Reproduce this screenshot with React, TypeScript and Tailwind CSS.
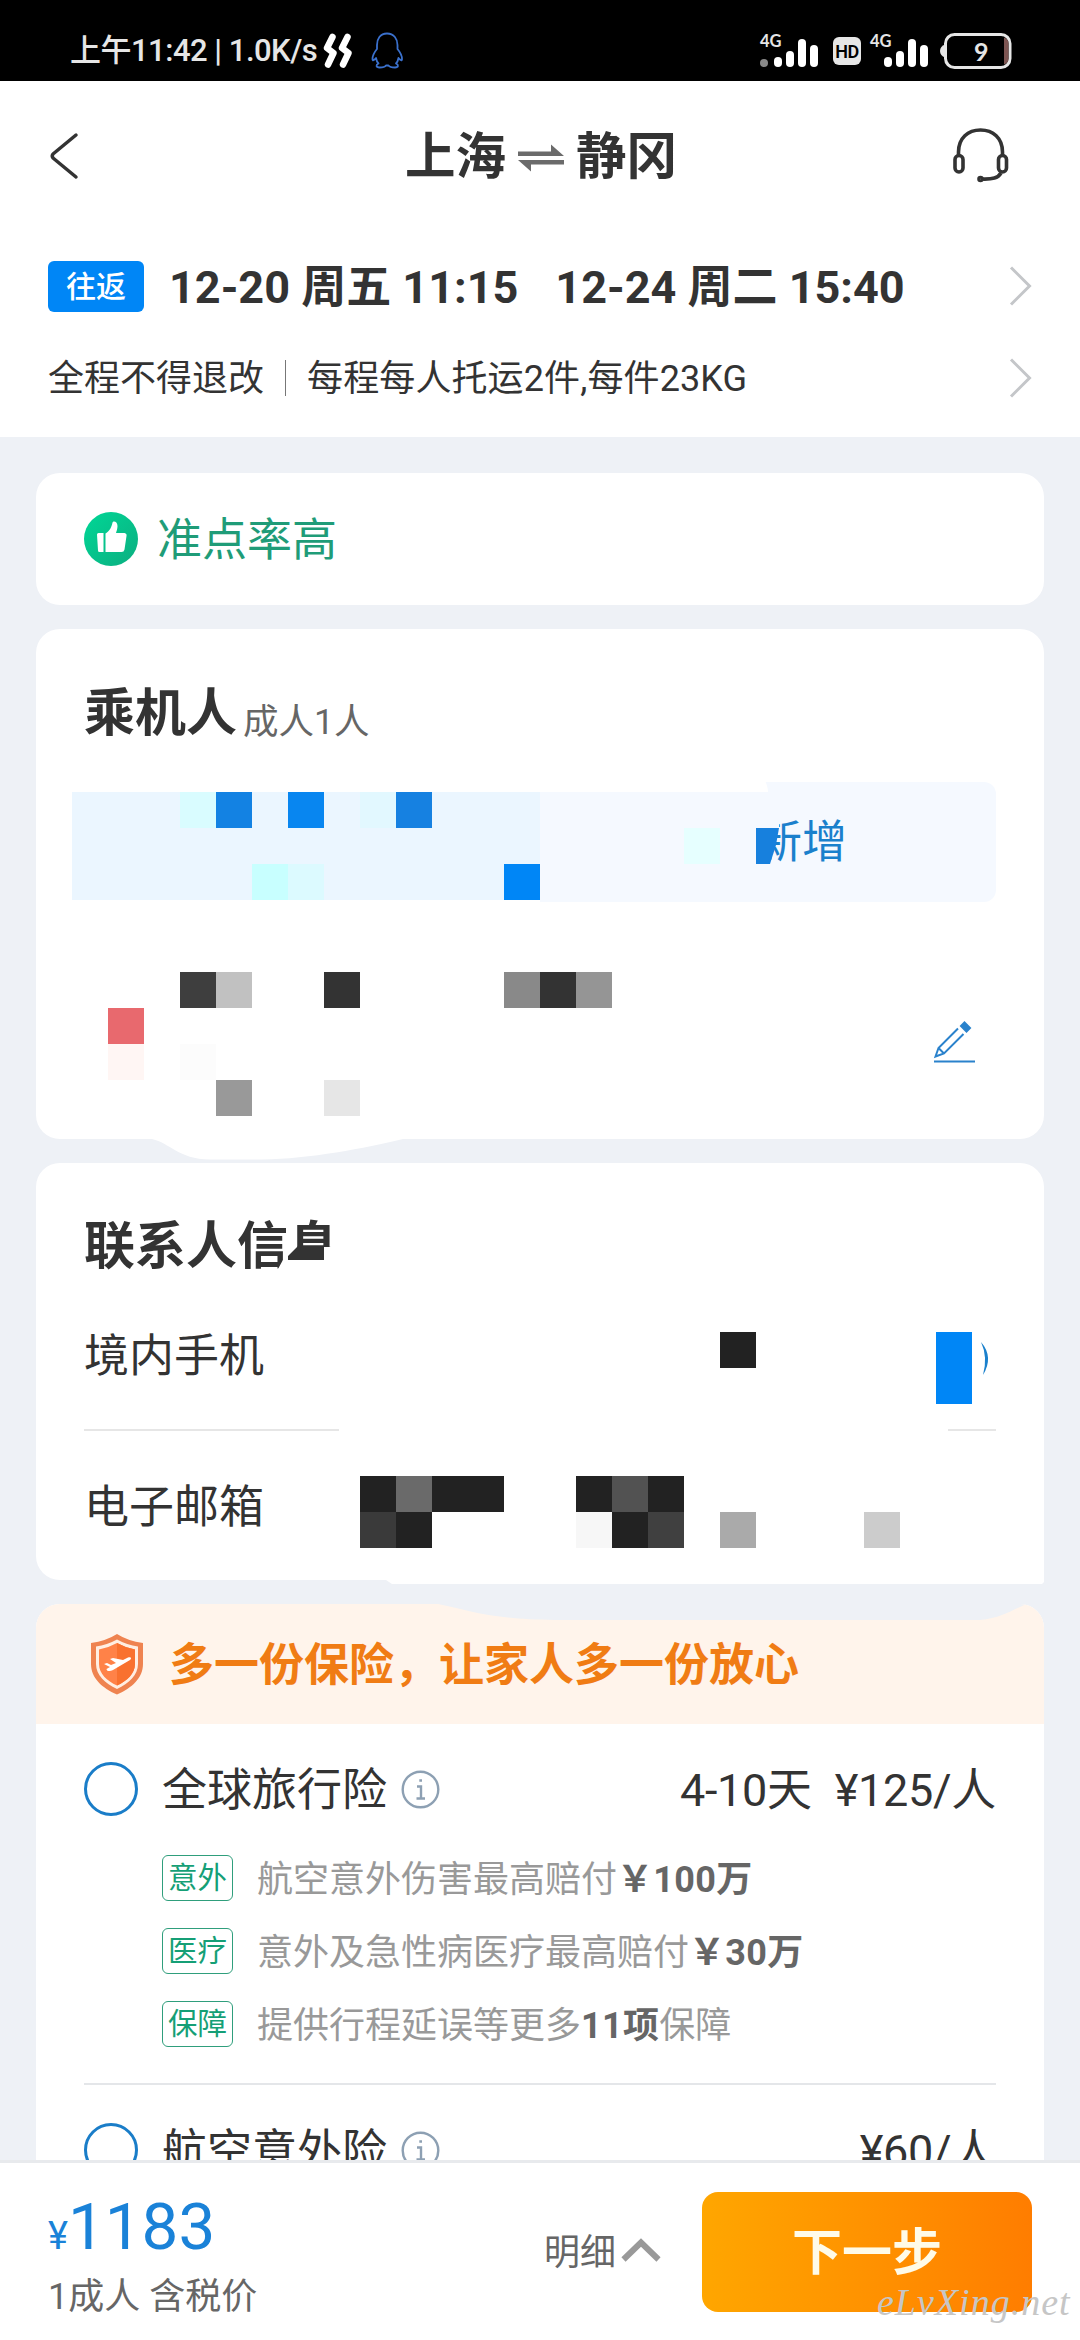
type Cell = [x: number, y: number, fill: string, w?: number, h?: number];

const CELL = 36;

// redacted areas of the passenger card
const passengerCells: Cell[] = [
  [180, 792, '#d9fcff'],
  [216, 792, '#1382e3'],
  [288, 792, '#0886f0'],
  [360, 792, '#e2f8ff'],
  [396, 792, '#1681e1'],
  [684, 828, '#e6ffff'],
  [252, 864, '#c8ffff'],
  [288, 864, '#dcfaff'],
  [504, 864, '#0086f6'],
  [180, 972, '#3e3e3e'],
  [216, 972, '#c1c1c1'],
  [324, 972, '#333333'],
  [504, 972, '#898989'],
  [540, 972, '#333333'],
  [576, 972, '#959595'],
  [108, 1008, '#e8696e'],
  [108, 1044, '#fff6f4'],
  [180, 1044, '#fcfcfc'],
  [216, 1080, '#999999'],
  [324, 1080, '#e6e6e6'],
];

// redacted areas of the contact card
const contactCells: Cell[] = [
  [720, 1332, '#222222'],
  [936, 1332, '#0086f6', 36, 72],
  [360, 1476, '#222222'],
  [396, 1476, '#6a6a6a'],
  [432, 1476, '#222222', 72],
  [576, 1476, '#222222'],
  [612, 1476, '#525252'],
  [648, 1476, '#222222'],
  [360, 1512, '#3a3a3a'],
  [396, 1512, '#222222'],
  [576, 1512, '#f7f7f7'],
  [612, 1512, '#222222'],
  [648, 1512, '#404040'],
  [720, 1512, '#aaaaaa'],
  [864, 1512, '#cccccc'],
];

const benefits = [
  { tag: '意外', before: '航空意外伤害最高赔付', strong: '￥100万', after: '' },
  { tag: '医疗', before: '意外及急性病医疗最高赔付', strong: '￥30万', after: '' },
  { tag: '保障', before: '提供行程延误等更多', strong: '11项', after: '保障' },
];

const Cells = ({ cells }: { cells: Cell[] }) => (
  <>
    {cells.map(([x, y, fill, w = CELL, h = CELL]) => (
      <rect key={`${x}-${y}`} x={x} y={y} width={w} height={h} fill={fill} />
    ))}
  </>
);

const ChevronRight = () => (
  <svg className="-mr-px ml-auto h-[42px] w-6" viewBox="0 0 24 42" fill="none" stroke="#c4c6c9" strokeWidth="3">
    <path d="M2 2.5L20.5 21L2 39.5" />
  </svg>
);

const Signal = ({ dot = false }: { dot?: boolean }) => (
  <svg className="h-[36px] w-[60px] overflow-visible" viewBox="0 0 60 36" fill="#fff">
    {dot && <circle cx="4" cy="30" r="4" fill="#888" />}
    <rect x="14" y="24" width="8" height="10" rx="4" />
    <rect x="26" y="18" width="8" height="16" rx="4" />
    <rect x="38" y="6" width="8" height="28" rx="4" />
    <rect x="50" y="12" width="8" height="22" rx="4" />
  </svg>
);

const Network = ({ dot = false }: { dot?: boolean }) => (
  <div className="relative">
    <Signal dot={dot} />
    <span className="absolute -top-[2px] left-0 font-['Lato',sans-serif] text-[16.5px] leading-[20px] font-bold text-[#e6e6e6]">4G</span>
  </div>
);

const StatusBar = () => (
  <div className="flex h-[81px] shrink-0 items-start bg-black pl-[70px] text-[#e6e6e6]">
    <span className="mt-[35px] w-[250px] text-[31px] leading-8 font-medium tracking-[-0.5px] whitespace-nowrap">
      上午11:42 | 1.0K/s
    </span>
    <svg className="mt-[33px] ml-[3px] h-[36px] w-[30px]" viewBox="0 0 30 36" fill="none" stroke="#fff" strokeWidth="6.5" strokeLinecap="round" strokeLinejoin="round">
      <path d="M9.500 4L4 15L10.500 20L5 31.500" />
      <path d="M24.500 4L19 15L25.500 20L20 31.500" />
    </svg>
    <svg className="mt-[32px] ml-[18px] h-[37px] w-[33px]" viewBox="0 0 33 37" fill="none" stroke="#3a70cc" strokeWidth="1.800" strokeLinejoin="round">
      <path d="M16 1.500C9 1.500 6 7 6 13V17C3.500 20 1.500 24 1.500 27C1.500 29 3 28.500 5 26C5.500 29 6.500 30.500 7.500 31.500C4.500 33 5 35.500 8.500 35.500C12 35.500 14 35 15 33.500H17.500C18.500 35 20.500 35.500 24 35.500C27.500 35.500 28 33 25 31.500C26 30.500 27 29 27.500 26C29.500 28.500 31 29 31 27C31 24 29 20 26.500 17V13C26.500 7 23 1.500 16 1.500Z" />
    </svg>
    <div className="mt-[33px] ml-auto flex w-[320px] items-start">
      <Network dot />
      <span className="mt-[4px] ml-[13px] flex h-7 w-7 items-center justify-center rounded-md bg-[#e6e6e6] text-[18px] font-semibold tracking-tight text-black">
        HD
      </span>
      <div className="ml-[9px]">
        <Network />
      </div>
      <div className="relative ml-[9px]">
        <svg className="h-[36px] w-[73px]" viewBox="0 0 73 36" fill="none">
          <path d="M6 11.500C3 12.500 1 15 1 18C1 21 3 23.500 6 24.500Z" fill="#e6e6e6" />
          <rect x="6.500" y="1.500" width="64.500" height="33" rx="9" stroke="#e6e6e6" strokeWidth="3" />
          <path d="M65 4.500C68 5.500 69.500 7.500 69.500 10V26C69.500 28.500 68 30.500 65 31.500Z" fill="#7d5552" />
        </svg>
        <span className="absolute top-0 left-[35px] font-['Lato',sans-serif] text-[25px] leading-[36px] font-bold">9</span>
      </div>
    </div>
  </div>
);

const Header = () => (
  <header className="flex h-[150px] items-center justify-between pr-[70px] pl-[48px]">
    <svg className="h-[48px] w-[58px]" viewBox="0 0 58 48" fill="none" stroke="#333" strokeWidth="3.500" strokeLinecap="round" strokeLinejoin="round">
      <path d="M28 3L5 22Q3.500 24 5 26L28 45" />
    </svg>
    <h1 className="flex items-center pt-[3px] pl-[24px] text-[50.500px] leading-none font-bold">
      上海
      <svg className="mx-[12px] h-[30px] w-[46px]" viewBox="0 0 46 30" fill="#6b6b6b">
        <path d="M0 8.500H33V1.500L46 13H0Z" />
        <path d="M46 21.500H13V28.500L0 17H46Z" />
      </svg>
      静冈
    </h1>
    <svg className="h-[58px] w-[58px]" viewBox="951 127 58 58" fill="none" stroke="#333" strokeWidth="3.600">
      <path d="M957.500 155V152C957.500 138 967 130 979.500 130C992 130 1001.500 138 1001.500 152V155" />
      <rect x="954" y="155.500" width="8" height="16.500" rx="4" />
      <rect x="997.500" y="155.500" width="8" height="16.500" rx="4" />
      <path d="M1000 173C997 178 992 179.500 980 179" />
      <circle cx="979.500" cy="179" r="1.500" />
    </svg>
  </header>
);

const Trip = () => (
  <section className="px-12 pb-[22px]">
    <div className="flex h-[110px] items-center">
      <span className="flex h-[51px] w-24 items-center justify-center rounded-md bg-[#0086f6] pt-px text-[30px] leading-none font-medium text-white">往返</span>
      <span className="ml-[25px] pt-[2px] text-[45px] leading-none font-bold whitespace-nowrap">12-20 周五 11:15</span>
      <span className="ml-[37px] pt-[2px] text-[45px] leading-none font-bold whitespace-nowrap">12-24 周二 15:40</span>
      <ChevronRight />
    </div>
    <div className="flex h-[74px] items-center text-[36px] leading-none">
      <span className="pt-px">全程不得退改</span>
      <span className="mr-[21px] ml-[21px] h-[36px] w-px bg-[#777]" />
      <span className="pt-px tracking-[0.12px]">每程每人托运2件,每件23KG</span>
      <ChevronRight />
    </div>
  </section>
);

const Passengers = () => (
  <section className="relative h-[510px] shrink-0 rounded-3xl bg-white px-12 pt-[58px]">
    <div className="flex items-center leading-none">
      <h2 className="text-[51px] leading-[52px] font-bold">乘机人</h2>
      <span className="mt-[18px] ml-[6px] text-[35.500px] text-[#666]">成人1人</span>
    </div>
    <div className="mt-[41px] flex h-[120px] items-center rounded-xl bg-[#f5f9ff] pt-[2px] pl-[673px] text-[45px] leading-none text-[#1a80cc]">
      新增
    </div>
    <svg className="absolute top-0 left-0 h-[540px] w-[1008px]" viewBox="36 629 1008 540">
      <path d="M72 775H763C765 781 768 786 768 792H540V902H72Z" fill="#fff" />
      <rect x="72" y="792" width="468" height="108" fill="#ebf6ff" />
      <path d="M732 815H779V828H756V864H732Z" fill="#f5f9ff" />
      <path d="M756 828H779L776 845L770 864H756Z" fill="#1780dd" />
      <Cells cells={passengerCells} />
      <path d="M152 1139C170 1143 178 1159 210 1159.500H262C310 1159 365 1148 403 1139V1136H152Z" fill="#fff" />
      <g fill="none" stroke="#2a82cc" strokeWidth="2">
        <path d="M934 1061.500H975" />
        <path d="M958 1028.500L938.500 1048L935.500 1056.500L944 1053.500L963.500 1034M938.500 1048L944 1053.500" />
        <path d="M964.500 1022.500L970 1028L966.500 1031.500L961 1026Z" fill="#2a82cc" />
      </g>
    </svg>
  </section>
);

const Contact = () => (
  <section className="relative h-[417px] shrink-0 rounded-3xl bg-white px-12 pt-[58px]">
    <h2 className="text-[51px] leading-[52px] font-bold">联系人信息</h2>
    <div className="mt-[8px] flex h-[148px] items-center pt-[3px] text-[45px] leading-none">境内手机</div>
    <div className="flex justify-between">
      <span className="h-[2px] w-[255px] bg-[#e6e6e6]" />
      <span className="h-[2px] w-[48px] bg-[#e6e6e6]" />
    </div>
    <div className="flex h-[149px] items-center pt-[3px] text-[45px] leading-none">电子邮箱</div>
    <svg className="absolute top-0 left-0 h-[425px] w-[1008px]" viewBox="36 1163 1008 425">
      <path d="M287 1247H340V1280H272L284 1258Z" fill="#fff" />
      <path d="M288 1260V1256L298 1246H331V1246L324 1247V1260Z" fill="#333" />
      <path d="M981 1342Q994 1357 983 1375Q988 1357 981 1342Z" fill="#1a80cc" />
      <Cells cells={contactCells} />
      <path d="M900 1550H1044V1582L1042 1584H392L386 1580V1570H900Z" fill="#fff" />
    </svg>
  </section>
);

const PlanTitle = ({ name, days, price }: { name: string; days?: string; price: string }) => (
  <div className="flex h-[54px] items-center text-[45px] leading-none whitespace-nowrap">
    <span className="h-[54px] w-[54px] rounded-full border-[3px] border-[#1a7dc8]" />
    <span className="ml-[24px] pt-[2px]">{name}</span>
    <svg className="ml-[14px] h-[39px] w-[39px]" viewBox="0 0 39 39" fill="none" stroke="#8da0b3" strokeWidth="2.400">
      <circle cx="19.500" cy="19.500" r="17.800" />
      <path d="M16 16.500H20V28.500M15.500 28.500H24M18.300 10.500H21" />
    </svg>
    <span className="ml-auto pt-[2px] tracking-[-0.3px]">{days}</span>
    <span className="ml-[23px] pt-[2px] tracking-[-0.3px]">{price}</span>
  </div>
);

const Insurance = () => (
  <section className="relative h-[700px] shrink-0 overflow-hidden rounded-3xl bg-white">
    <div className="flex h-[120px] items-center bg-[#fff4eb] pl-[54px]">
      <svg className="h-[62px] w-[54px]" viewBox="0 0 54 62">
        <path d="M27 1Q38 8 53 10V31C53 45 42 55 27 61.500C12 55 1 45 1 31V10Q16 8 27 1Z" fill="#ef8350" />
        <path d="M27 6.500Q37 12 48 13.500V31C48 42 39 50.500 27 56C15 50.500 6 42 6 31V13.500Q17 12 27 6.500Z" fill="#ffeee2" />
        <path d="M27 10Q36 15 45 16.500V31C45 40.500 37 48 27 52.500C17 48 9 40.500 9 31V16.500Q18 15 27 10Z" fill="#ff8248" />
        <path d="M27 10Q36 15 45 16.500V31C45 40.500 37 48 27 52.500Z" fill="#f9712f" />
        <path d="M14 31L17 30L21 32L26 30L20 26L23 25L33 27L38 24.500C41 23.500 42 25 40 27L23 37C19 39 16.500 38 16.500 36L20 34Z" fill="#fff" />
      </svg>
      <span className="ml-[25px] pt-[3px] text-[45px] leading-none font-bold text-[#f07c14]">多一份保险，让家人多一份放心</span>
    </div>
    <svg className="absolute top-0 left-0 h-5 w-full" viewBox="36 1604 1008 20">
      <path d="M438 1604C475 1612 495 1619.500 555 1620H980C1003 1618 1015 1608 1027 1604Z" fill="#eef1f6" />
    </svg>
    <div className="px-12 pt-[38px]">
      <PlanTitle name="全球旅行险" days="4-10天" price="¥125/人" />
      <ul className="mt-[39px] flex flex-col gap-[27px] pl-[78px]">
        {benefits.map((b) => (
          <li key={b.tag} className="flex h-[46px] items-center text-[36px] leading-none whitespace-nowrap text-[#999]">
            <span className="flex h-[46px] w-[71px] items-center justify-center rounded-md border-[1.5px] border-[#2f9e7c] pt-[2px] text-[29.500px] text-[#159f76]">{b.tag}</span>
            <span className="ml-[24px] pt-[3px]">
              {b.before}
              <b className="font-bold tracking-[0.3px] text-[#666]">{b.strong}</b>
              {b.after}
            </span>
          </li>
        ))}
      </ul>
      <div className="mt-[36px] mb-[38px] h-[2px] bg-[#e4e6e9]" />
      <PlanTitle name="航空意外险" price="¥60/人" />
    </div>
  </section>
);

const Footer = () => (
  <footer className="relative flex h-[180px] shrink-0 items-start border-t-[3px] border-[#e8eaed] bg-white pr-12 pl-12">
    <div>
      <div className="mt-[31px] flex items-baseline leading-[66px] text-[#1a82d8]">
        <span className="text-[38px]">¥</span>
        <span className="text-[65.500px]">1183</span>
      </div>
      <div className="mt-[10px] text-[36px] leading-[36px] text-[#666]">1成人 含税价</div>
    </div>
    <div className="mt-[29px] ml-auto flex h-[120px] items-center">
      <span className="pt-[2px] text-[36px] leading-none text-[#666]">明细</span>
      <svg className="-mt-[4px] ml-[5px] h-[24px] w-[40px]" viewBox="0 0 40 24" fill="none" stroke="#999" strokeWidth="6">
        <path d="M2.500 21.500L20 4.500L37.500 21.500" />
      </svg>
      <button className="ml-[41px] h-[120px] w-[330px] rounded-2xl bg-linear-to-r from-[#ffa600] to-[#ff7d00] pt-[2px] text-[50px] leading-none font-bold text-[#fffbe8]">
        下一步
      </button>
    </div>
    <span className="absolute top-[120px] left-[877px] font-['Liberation_Serif',serif] text-[38px] leading-none tracking-[1px] text-[#c6c6c6] italic">
      eLvXing.net
    </span>
  </footer>
);

const App = () => {
  return (
    <div className="flex h-[2340px] w-[1080px] flex-col overflow-hidden bg-[#eef1f6] font-['Roboto','Noto_Sans_CJK_SC',sans-serif] text-[#333]">
      <StatusBar />
      <div className="h-[356px] shrink-0 bg-white">
        <Header />
        <Trip />
      </div>
      <main className="flex min-h-0 flex-1 flex-col gap-6 overflow-hidden px-9 pt-9">
        <section className="flex h-[132px] shrink-0 items-center rounded-3xl bg-white pl-12">
          <svg className="h-[54px] w-[54px]" viewBox="0 0 54 54" fill="#fff">
            <defs>
              <linearGradient id="punctual" x1="0" y1="0" x2="1" y2="1">
                <stop offset="0" stopColor="#00d796" />
                <stop offset="1" stopColor="#0cae80" />
              </linearGradient>
            </defs>
            <circle cx="27" cy="27" r="27" fill="url(#punctual)" />
            <path d="M13 22.500Q13 21 14.500 21H19.500V40H15.500Q14 40 14 38.500Z" />
            <path d="M21.500 21.500C26 19 27.500 15 28.500 10.500C29 8.500 33.500 9 33.500 14C33.500 17 32.500 19 32 21H40.500Q43 21.500 42.500 24L40.500 37.500Q40 40 37.500 40H21.500Z" />
          </svg>
          <span className="ml-[19px] pt-[3px] text-[45px] leading-none text-[#1f9c78]">准点率高</span>
        </section>
        <Passengers />
        <Contact />
        <Insurance />
      </main>
      <Footer />
    </div>
  );
};

export default App;
